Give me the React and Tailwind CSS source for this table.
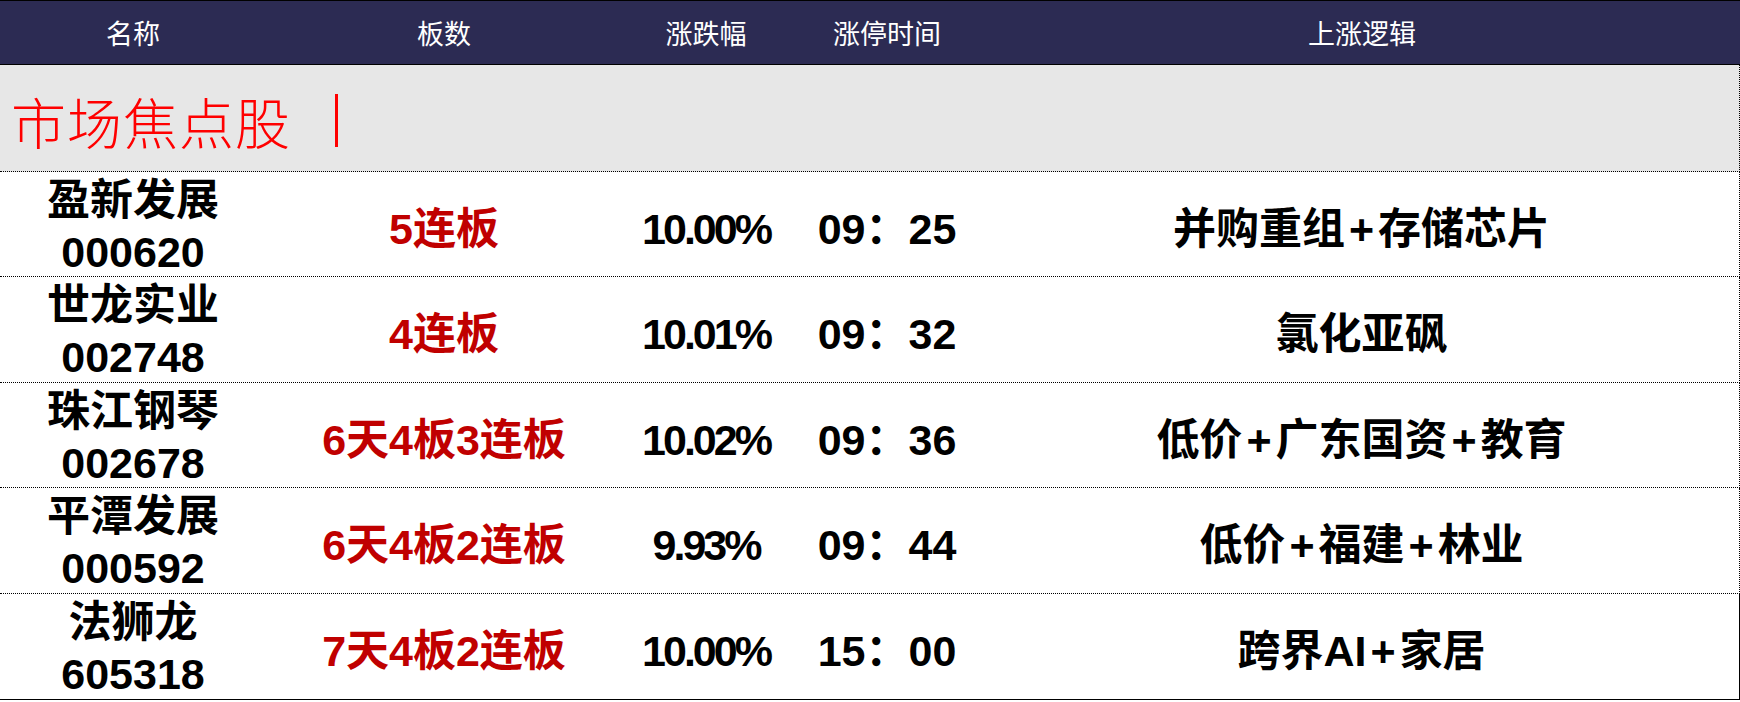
const headers = ["名称", "板数", "涨跌幅", "涨停时间", "上涨逻辑"];

const rows = [
  { name: "盈新发展", code: "000620", boards: "5连板", pct: "10.00%", time: "09：25", logic: "并购重组+存储芯片", h: "h-[105px]" },
  { name: "世龙实业", code: "002748", boards: "4连板", pct: "10.01%", time: "09：32", logic: "氯化亚砜", h: "h-[106px]" },
  { name: "珠江钢琴", code: "002678", boards: "6天4板3连板", pct: "10.02%", time: "09：36", logic: "低价+广东国资+教育", h: "h-[105px]" },
  { name: "平潭发展", code: "000592", boards: "6天4板2连板", pct: "9.93%", time: "09：44", logic: "低价+福建+林业", h: "h-[106px]" },
  { name: "法狮龙", code: "605318", boards: "7天4板2连板", pct: "10.00%", time: "15：00", logic: "跨界AI+家居", h: "h-[106px]" },
];

const cols = "grid grid-cols-[266px_356px_168px_194px_1fr]";

// "+" in the logic column sits with a little air on each side
function Logic({ text }) {
  const parts = text.split("+");
  return (
    <>
      {parts.map((p, i) => (
        <span key={i}>
          {i > 0 && <span className="mx-[4px]">+</span>}
          {p}
        </span>
      ))}
    </>
  );
}

export default function App() {
  return (
    <div className="h-[702px] w-[1740px] bg-white font-['Liberation_Sans','Noto_Sans_CJK_SC',sans-serif] text-black">
      <div className="border-t border-black">
        {/* header */}
        <div className={`${cols} h-[64px] items-center border-b border-black bg-[#2c2b53] text-[27px] text-white font-['Noto_Sans_CJK_SC',sans-serif]`}>
          {headers.map((h) => (
            <div key={h} className="text-center leading-none">{h}</div>
          ))}
        </div>

        {/* section band */}
        <div className="flex h-[107px] items-center border-r border-b border-dotted border-black bg-[#e7e7e7] pl-[11px] pt-[4px]">
          <span className="font-['Noto_Sans_CJK_SC',serif] text-[55px] font-light leading-none tracking-[1px] text-[#ff0000]">
            市场焦点股
          </span>
          <span className="ml-[44px] h-[53px] w-[3px] bg-[#ff0000]" />
        </div>

        {/* rows */}
        {rows.map((r, i) => (
          <div
            key={r.code}
            className={`${cols} ${r.h} items-center border-r border-black text-[43px] font-bold ${
              i === rows.length - 1 ? "border-b border-b-black" : "border-b border-dotted"
            }`}
          >
            <div className="flex flex-col items-center pt-[2px] leading-[52px]">
              <span>{r.name}</span>
              <span>{r.code}</span>
            </div>
            <div className="pt-[8px] text-center leading-none text-[#c00000]">{r.boards}</div>
            <div className="pt-[8px] text-center leading-none tracking-[-3px]">{r.pct}</div>
            <div className="pt-[8px] text-center leading-none">{r.time}</div>
            <div className="pt-[8px] text-center leading-none">
              <Logic text={r.logic} />
            </div>
          </div>
        ))}
      </div>
    </div>
  );
}
